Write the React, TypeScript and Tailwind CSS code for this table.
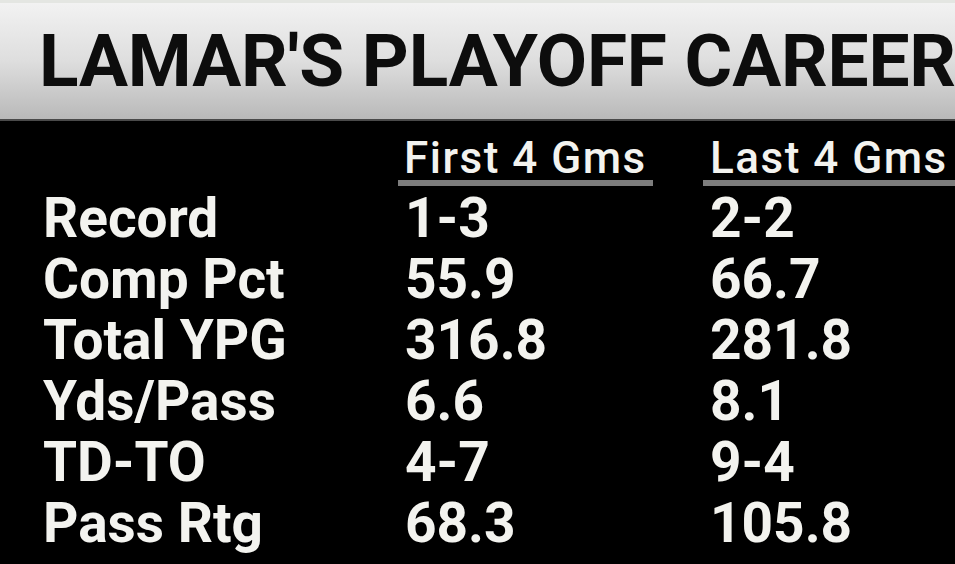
import React from "react";

const rows: [string, string, string][] = [
  ["Record", "1-3", "2-2"],
  ["Comp Pct", "55.9", "66.7"],
  ["Total YPG", "316.8", "281.8"],
  ["Yds/Pass", "6.6", "8.1"],
  ["TD-TO", "4-7", "9-4"],
  ["Pass Rtg", "68.3", "105.8"],
];

export default function App() {
  return (
    <div
      className="w-[955px] h-[564px] bg-black overflow-hidden text-[#f3f3ef]"
      style={{ fontFamily: "Roboto, 'Liberation Sans', sans-serif" }}
    >
      <div className="h-[3px] bg-[#e4e6e2]" />
      <div className="h-[116px] bg-gradient-to-b from-[#f2f2f2] via-[#dedede] to-[#b9b9b9] flex items-start pl-[39px] pt-[22px]">
        <h1 className="text-[73px] leading-[73px] font-bold text-[#0d0d0d] tracking-[-0.2px] whitespace-nowrap">
          LAMAR'S PLAYOFF CAREER
        </h1>
      </div>
      <div className="h-[2px] bg-[#4a4a4a]" />
      <div className="pt-[15px]">
        <div className="grid grid-cols-[398px_305px_1fr]">
          <div />
          <div>
            <div className="text-[44px] leading-[44px] font-medium tracking-[1.5px] pl-[6px] whitespace-nowrap">First 4 Gms</div>
            <div className="h-[6px] w-[255px] bg-[#7d7d7d]" />
          </div>
          <div>
            <div className="text-[44px] leading-[44px] font-medium tracking-[1.5px] pl-[7px] whitespace-nowrap">Last 4 Gms</div>
            <div className="h-[6px] w-full bg-[#7d7d7d]" />
          </div>
        </div>
        <div className="pt-[2px]">
          {rows.map(([label, a, b]) => (
            <div key={label} className="grid grid-cols-[398px_305px_1fr] text-[55px] leading-[61px] font-bold">
              <div className="pl-[43px] whitespace-nowrap">{label}</div>
              <div className="pl-[7px] whitespace-nowrap">{a}</div>
              <div className="pl-[7px] whitespace-nowrap">{b}</div>
            </div>
          ))}
        </div>
      </div>
    </div>
  );
}
